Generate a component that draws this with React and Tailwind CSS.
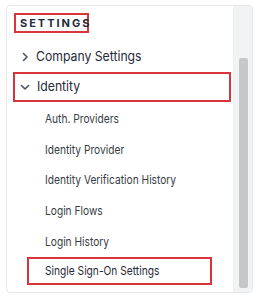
import React from 'react';

const Chevron = ({ down }) => (
  <svg width="10" height="10" viewBox="0 0 10 10" fill="none" stroke="#4b5563" strokeWidth="1.6" strokeLinecap="round" strokeLinejoin="round">
    {down ? <path d="M1.5 3.5 L5 7 L8.5 3.5" /> : <path d="M3.5 1.5 L7 5 L3.5 8.5" />}
  </svg>
);

const subItems = [
  'Auth. Providers',
  'Identity Provider',
  'Identity Verification History',
  'Login Flows',
  'Login History',
];

export default function App() {
  return (
    <div className="w-[260px] h-[300px] bg-white pt-[5px] pl-[6px] font-['Inter','Noto_Sans',sans-serif]">
      <div className="w-[247px] h-[288px] border border-[#e6e8eb] rounded-[4px] flex overflow-hidden">
        <div className="flex-1 flex flex-col pl-[7px]">
          <div className="mt-[7px] w-[75px] h-[20px] border-2 border-[#d8343c] flex items-center pl-[4px]">
            <span className="text-[11px] font-bold tracking-[0.18em] text-[#1f2b3d] leading-none">SETTINGS</span>
          </div>
          <div className="h-[31px] mt-[8px] flex items-center pl-[6px]">
            <Chevron />
            <span className="ml-[6px] text-[13px] text-[#1f2937] origin-left scale-x-[0.94] whitespace-nowrap">Company Settings</span>
          </div>
          <div className="h-[30px] w-[218px] -ml-[1px] border-2 border-[#d8343c] flex items-center pl-[5px]">
            <Chevron down />
            <span className="ml-[7px] text-[13px] text-[#1f2937] origin-left scale-x-[0.94] whitespace-nowrap">Identity</span>
          </div>
          <div className="flex flex-col pt-[2px]">
            {subItems.map((t) => (
              <div key={t} className="h-[30.6px] flex items-center pl-[31px]">
                <span className="text-[12px] text-[#363c45] origin-left scale-x-[0.85] whitespace-nowrap">{t}</span>
              </div>
            ))}
          </div>
          <div className="h-[28px] w-[185px] ml-[13px] border-2 border-[#d8343c] flex items-center pl-[16px]">
            <span className="text-[12px] text-[#1f2937] origin-left scale-x-[0.85] whitespace-nowrap">Single Sign-On Settings</span>
          </div>
        </div>
        <div className="w-[19px] bg-[#f2f3f5] border-l border-[#eceef0] flex flex-col items-center pt-[52px] pb-[4px]">
          <div className="w-[9px] flex-1 bg-[#c6c7c9] rounded-[2px]" />
        </div>
      </div>
    </div>
  );
}
